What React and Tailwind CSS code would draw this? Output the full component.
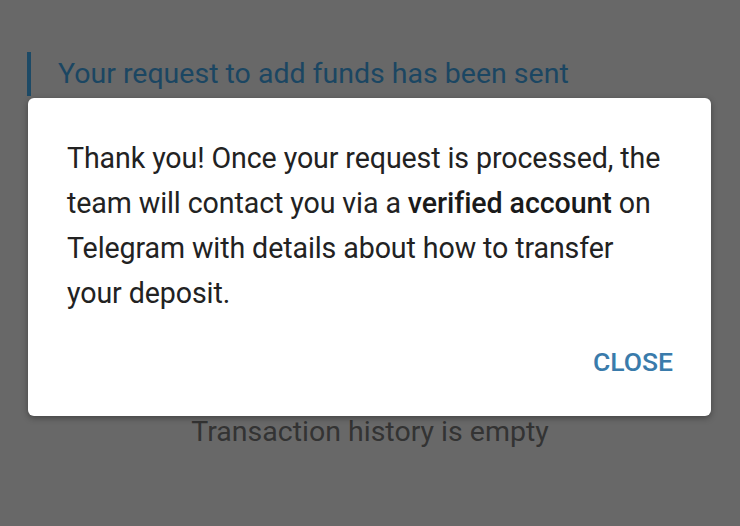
import React from 'react';

const App = () => {
  return (
    <div className="relative w-[740px] h-[526px] overflow-hidden bg-[#686868] font-['Roboto','Liberation_Sans',sans-serif]">
      <div className="pt-[52px] pl-[27px]">
        <div className="border-l-4 border-[#1d4a66] pl-[27px] h-[44px] flex items-center">
          <span className="text-[28.5px] leading-[36px] text-[#1b4662]">Your request to add funds has been sent</span>
        </div>
      </div>

      <div className="mt-[318px] text-center text-[28.5px] leading-[36px] text-[#333333]">
        Transaction history is empty
      </div>

      <div className="absolute left-[28px] top-[98px] w-[683px] h-[318px] bg-white rounded-[6px] shadow-[0_2px_6px_rgba(0,0,0,0.35)] flex flex-col">
        <p className="mt-[38px] ml-[39px] w-[600px] text-[28.6px] leading-[45px] text-[#222222] tracking-[-0.1px]">
          Thank you! Once your request is processed, the team will contact you via a{' '}
          <span className="font-medium text-[#1a1a1a]">verified account</span> on Telegram with details about how to transfer your deposit.
        </p>
        <div className="flex justify-end pr-[38px] mt-[26px]">
          <button className="text-[26.5px] leading-[40px] font-medium text-[#3a7bab]">CLOSE</button>
        </div>
      </div>
    </div>
  );
};

export default App;
